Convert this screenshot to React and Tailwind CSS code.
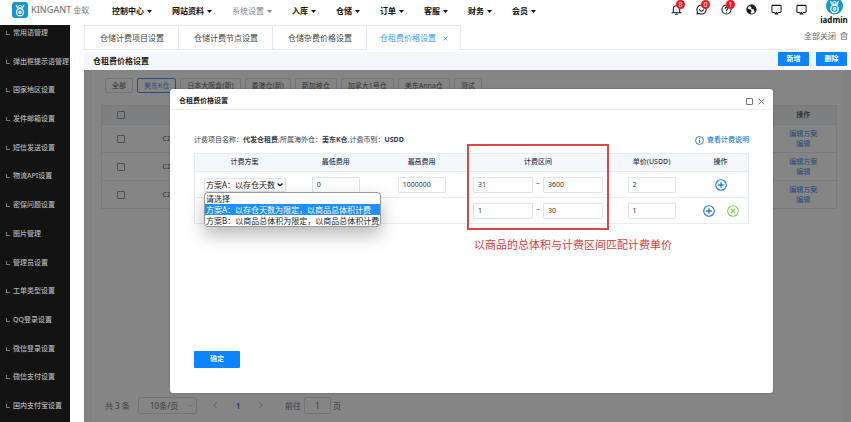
import React from "react";

const NAV = [
  { label: "控制中心" },
  { label: "网站资料" },
  { label: "系统设置", muted: true },
  { label: "入库" },
  { label: "仓储" },
  { label: "订单" },
  { label: "客服" },
  { label: "财务" },
  { label: "会员" },
];

const SIDE = [
  "常用语管理",
  "弹出框提示语管理",
  "国家地区设置",
  "发件邮箱设置",
  "短信发送设置",
  "物流API设置",
  "密保问题设置",
  "图片管理",
  "管理员设置",
  "工单类型设置",
  "QQ登录设置",
  "微信登录设置",
  "微信支付设置",
  "国内支付宝设置",
];

const TABS = ["仓储计费项目设置", "仓储计费节点设置", "仓储杂费价格设置"];

const WAREHOUSES = [
  "全部",
  "美东K仓",
  "日本大阪倉(新)",
  "香港仓(新)",
  "新加坡仓",
  "加拿大1号仓",
  "美东Anna仓",
  "测试",
];

const PLANS = [
  "请选择",
  "方案A：以存仓天数为限定，以商品总体积计费",
  "方案B：以商品总体积为限定，以商品总体积计费",
];

function AntMark() {
  return (
    <g fill="none" stroke="#fff" strokeWidth="1.3">
      <circle cx="8" cy="10.200" r="3.500" />
      <circle cx="8" cy="10.200" r="1.100" />
      <path d="M5.800 6.300 4.200 3.200M10.200 6.300l1.600-3.100" strokeWidth="1.100" strokeLinecap="round" />
      <path d="M6.300 4.600a1.800 1.800 0 0 1 3.400 0q0 1.600-1.700 1.700-1.700-.1-1.700-1.700z" strokeWidth="1" />
    </g>
  );
}

function Badge({ children }) {
  return (
    <span className="absolute -top-1 left-[5px] flex size-[9px] items-center justify-center rounded-full bg-[#f5141e] text-[7px] leading-none text-white">
      {children}
    </span>
  );
}

function HeaderIcon({ label, badge, children }) {
  return (
    <button type="button" aria-label={label} className="relative size-[11px]">
      <svg viewBox="0 0 12 12" className="size-full" fill="none" stroke="#111" strokeWidth="1.1" strokeLinecap="round" strokeLinejoin="round">
        {children}
      </svg>
      {badge && <Badge>{badge}</Badge>}
    </button>
  );
}

function Monitor() {
  return <path d="M4 9.200H1.900A.9.9 0 0 1 1 8.300V2.400a.9.9 0 0 1 .9-.9h8.200a.9.9 0 0 1 .9.9v5.900a.9.9 0 0 1-.9.9H8M4.300 11h3.400L6 9z" />;
}

function Header() {
  return (
    <header className="flex h-[25px] shrink-0 items-start bg-white">
      <a href="#home" className="flex w-[112px] shrink-0 items-center pl-3 pt-[2px]">
        <svg viewBox="0 0 16 16" className="mr-[3px] size-4 shrink-0">
          <rect width="16" height="16" rx="3" fill="#1596d8" />
          <AntMark />
        </svg>
        <span className="flex items-center gap-[2px] whitespace-nowrap text-[9px] leading-4 text-[#777b80]">
          <span className="font-medium">KINGANT</span>
          <span className="text-[8px]">金蚁</span>
        </span>
      </a>
      <nav className="flex flex-1 gap-5 pt-[5px]">
        {NAV.map((n) => (
          <button
            key={n.label}
            type="button"
            className={`flex items-center gap-[3px] whitespace-nowrap text-[8px] leading-3 ${n.muted ? "text-[#888]" : "font-bold text-[#111]"}`}
          >
            {n.label}
            <svg viewBox="0 0 10 6" className="h-[3px] w-[5px]">
              <path d="M0 0h10L5 6z" fill="currentColor" />
            </svg>
          </button>
        ))}
      </nav>
      <div className="flex gap-[14px] pr-[10px] pt-1">
        <HeaderIcon label="通知" badge="8">
          <path d="M1 9.500h10M2.500 9.300V5.500a3.500 3.500 0 0 1 7 0v3.800M5 11.300h2M6 2V1" />
        </HeaderIcon>
        <HeaderIcon label="消息" badge="0">
          <path d="M6 1a5 5 0 1 1-2.300 9.400L1.200 11l.4-2.600A5 5 0 0 1 6 1zM3.800 6.200a2.300 2.300 0 0 0 4.400 0" />
        </HeaderIcon>
        <HeaderIcon label="帮助" badge="1">
          <circle cx="6" cy="6" r="5" />
          <path d="M4.600 4.800a1.400 1.400 0 1 1 2 1.300q-.6.300-.6 1M6 8.800v.1" />
        </HeaderIcon>
        <HeaderIcon label="语言">
          <circle cx="6" cy="6" r="5" />
          <path d="M1.300 4.500 3 5.800l2 .4.800 1.300L5 9l-.3 1.800L2 9.200 1 6zM5.500 1.200 5 3l1.500 1L6 5.200l2.500.3.500 1.800 1 1.500L11 6.500 10 3.200 8 1.500z" fill="#111" strokeWidth="0.400" />
        </HeaderIcon>
        <HeaderIcon label="屏幕"><Monitor /></HeaderIcon>
        <HeaderIcon label="大屏"><Monitor /></HeaderIcon>
      </div>
      <button type="button" className="flex w-[34px] flex-col items-center overflow-hidden text-[8px] font-bold leading-[10px] text-[#111]">
        <svg viewBox="0 2 16 14" className="h-[15px] w-[17px]">
          <circle cx="8" cy="7.500" r="8" fill="#1596d8" />
          <AntMark />
        </svg>
        iadmin
      </button>
    </header>
  );
}

function Sidebar() {
  return (
    <aside className="w-[70px] shrink-0 overflow-hidden bg-[#131313]">
      <ul className="flex h-full flex-col justify-between pb-2">
        {SIDE.map((s) => (
          <li key={s}>
            <a href="#menu" className="flex h-4 items-center gap-[3px] whitespace-nowrap pl-[6px] text-[7px] font-medium leading-4 text-[#b5b5b5]">
              <span className="size-[4px] shrink-0 border-b border-l border-[#777]" />
              {s}
            </a>
          </li>
        ))}
      </ul>
    </aside>
  );
}

function TabBar() {
  return (
    <div className="flex h-[27px] shrink-0">
      <div className="flex h-[25px] flex-1 text-[8px] text-[#444]">
        <div role="tablist" className="flex border-l border-t border-[#e4e7ed]">
          {TABS.map((t) => (
            <button key={t} type="button" role="tab" className="whitespace-nowrap border-b border-r border-[#e4e7ed] pl-[15px] pr-[14px]">
              {t}
            </button>
          ))}
          <button type="button" role="tab" aria-selected="true" className="flex items-center gap-[7px] whitespace-nowrap border-r border-[#e4e7ed] pl-[13px] pr-3 text-[#409eff]">
            仓租费价格设置
            <svg viewBox="0 0 8 8" className="size-[5px]" stroke="currentColor" strokeWidth="1.2">
              <path d="m1 1 6 6M7 1 1 7" />
            </svg>
          </button>
        </div>
        <div className="flex-1 border-b border-[#e4e7ed]" />
      </div>
      <button type="button" className="flex h-[22px] w-[52px] items-center justify-end gap-1 whitespace-nowrap pr-[3px] text-[8px] text-[#666]">
        全部关闭
        <svg viewBox="0 0 10 10" className="size-2" fill="none" stroke="currentColor" strokeWidth="0.9">
          <path d="M.5 2.500h9M1.800 2.500v7h6.400v-7M3.500 2.300V.6h3v1.700M3.900 4.300v3.400M6.100 4.300v3.400" />
        </svg>
      </button>
    </div>
  );
}

function RateList() {
  return (
    <div className="flex h-full flex-col border-x-8 border-[#f6faf9] bg-white">
      <div className="flex flex-1 flex-col pb-2 pl-[9px] pr-[6px] pt-2">
        <div className="flex gap-[4px] pl-1">
          {WAREHOUSES.map((w, i) => (
            <button
              key={w}
              type="button"
              className={`h-[15px] whitespace-nowrap rounded-[2px] border px-[6px] text-[7px] leading-3 ${i === 1 ? "border-[#4a98f5] text-[#4a98f5]" : "border-[#dcdfe6] text-[#666]"}`}
            >
              {w}
            </button>
          ))}
        </div>
        <table className="mt-3 w-full table-fixed border-collapse text-[7px] leading-[10px]">
          <thead>
            <tr className="h-[19px] border border-[#e6eaf0] bg-[#f0f4f6]">
              <th className="w-[38px]">
                <input type="checkbox" aria-label="全选" className="mx-auto block size-2 appearance-none rounded-[1px] border border-[#999]" />
              </th>
              <th />
              <th className="w-[66px] font-medium text-[#555]">操作</th>
            </tr>
          </thead>
          <tbody>
            {[1, 2, 3].map((r) => (
              <tr key={r} className="h-[28px] border border-[#e6eaf0]">
                <td>
                  <input type="checkbox" aria-label={`选择第${r}行`} className="mx-auto block size-2 appearance-none rounded-[1px] border border-[#999]" />
                </td>
                <td className="pl-[23px] text-[#666]">CZ</td>
                <td className="text-center text-[#4a92ee]">
                  <a href="#plan" className="block">编辑方案</a>
                  <a href="#edit" className="block">编辑</a>
                </td>
              </tr>
            ))}
          </tbody>
        </table>
        <div className="mt-auto flex h-[17px] items-center whitespace-nowrap pl-1 text-[8px] text-[#777]">
          <span className="w-[33px]">共 3 条</span>
          <span className="relative flex h-full w-[59px] items-center">
            <select aria-label="每页条数" className="h-full w-full appearance-none rounded-[2px] border border-[#dcdfe6] pl-[11px]">
              <option>10条/页</option>
            </select>
            <svg viewBox="0 0 8 5" className="pointer-events-none absolute right-[4px] w-[5px]" fill="none" stroke="#aaa">
              <path d="m.5.500 3.500 3.500L7.500.5" />
            </svg>
          </span>
          <button type="button" aria-label="上一页" className="ml-4 w-1">
            <svg viewBox="0 0 5 8" fill="none" stroke="#999"><path d="M4.500.5 1 4l3.500 3.500" /></svg>
          </button>
          <button type="button" className="w-[42px] font-bold text-[#4a92ee]">1</button>
          <button type="button" aria-label="下一页" className="w-1">
            <svg viewBox="0 0 5 8" fill="none" stroke="#999"><path d="M.5.500 4 4 .5 7.500" /></svg>
          </button>
          <label htmlFor="goto" className="ml-[22px] mr-[3px]">前往</label>
          <input id="goto" defaultValue="1" className="mr-[2px] h-full w-[27px] rounded-[2px] border border-[#dcdfe6] text-center" />
          <span>页</span>
        </div>
      </div>
    </div>
  );
}

function Field({ label, value, className }) {
  return (
    <input
      aria-label={label}
      defaultValue={value}
      className={`h-4 rounded-[1px] border border-[#dfe4ea] bg-white pl-1 text-[7px] text-[#333] ${className}`}
    />
  );
}

function AddButton() {
  return (
    <button type="button" aria-label="添加" className="size-3">
      <svg viewBox="0 0 12 12" fill="none" stroke="#1a7be0" strokeWidth="1.1">
        <circle cx="6" cy="6" r="5.300" />
        <path d="M6 3.200v5.600M3.200 6h5.600" strokeWidth="1.3" />
      </svg>
    </button>
  );
}

function RemoveButton() {
  return (
    <button type="button" aria-label="移除" className="size-3">
      <svg viewBox="0 0 12 12" fill="none" stroke="#7ed957" strokeWidth="1.1">
        <circle cx="6" cy="6" r="5.300" />
        <path d="m4 4 4 4M8 4 4 8" strokeWidth="1.3" />
      </svg>
    </button>
  );
}

function RangeFields({ from, to }) {
  return (
    <div className="flex items-center justify-center gap-[3px]">
      <Field label="区间起" value={from} className="w-[60px]" />~
      <Field label="区间止" value={to} className="w-[60px]" />
    </div>
  );
}

function PlanSelect() {
  return (
    <div className="relative ml-[9px] w-[82px]">
      <select
        aria-label="计费方案"
        defaultValue={PLANS[1]}
        className="block h-[14px] w-full appearance-none overflow-hidden rounded-[1px] border border-[#dfe4ea] bg-white pl-px pr-[10px] text-[8px] leading-3 text-[#222]"
      >
        {PLANS.map((p) => (
          <option key={p}>{p}</option>
        ))}
      </select>
      <svg viewBox="0 0 8 5" className="pointer-events-none absolute right-[3px] top-[5px] w-[6px]" fill="none" stroke="#111" strokeWidth="1.8">
        <path d="m.8.800 3.200 3 3.200-3" />
      </svg>
      <ul
        role="listbox"
        aria-label="计费方案选项"
        className="absolute left-0 top-full z-10 overflow-hidden whitespace-nowrap rounded-[4px] border border-[#999] bg-white text-left text-[8px] leading-[11px] text-[#222] shadow-[0_8px_18px_rgba(0,0,0,0.28)]"
      >
        {PLANS.map((p, i) => (
          <li key={p} role="option" aria-selected={i === 1} className={`px-px ${i === 1 ? "bg-[#1e90ff] text-white" : ""}`}>
            {p}
          </li>
        ))}
      </ul>
    </div>
  );
}

function Dialog() {
  return (
    <section role="dialog" aria-label="仓租费价格设置" className="flex flex-1 flex-col rounded-[3px] bg-white shadow-[0_0_2px_rgba(0,0,0,0.3)]">
      <div className="flex h-[21px] shrink-0 items-center border-b border-[#eee] pl-[9px] pr-2 pt-[5px]">
        <h2 className="flex-1 text-[7px] font-bold text-[#222]">仓租费价格设置</h2>
        <button type="button" aria-label="最大化" className="mr-[5px] size-[7px] rounded-[1px] border border-[#777]" />
        <button type="button" aria-label="关闭" className="size-[7px]">
          <svg viewBox="0 0 8 8" stroke="#666" strokeWidth="1"><path d="m.8.800 6.400 6.400M7.200.8.800 7.200" /></svg>
        </button>
      </div>
      <div className="flex flex-1 flex-col items-start px-6 pb-[25px] pt-6">
        <div className="flex h-3 w-full items-center justify-between whitespace-nowrap text-[7px] text-[#333a50]">
          <p>
            计费项目名称：<b>代发仓租费</b>,所属海外仓：<b>美东K仓</b>,计费币别：<b>USDD</b>
          </p>
          <a href="#help" className="flex items-center gap-[3px] font-medium text-[#1a7be0]">
            <svg viewBox="0 0 10 10" className="size-[9px]" fill="none" stroke="currentColor">
              <circle cx="5" cy="5" r="4.400" />
              <path d="M5 4.300v3.200M5 2.400v1" />
            </svg>
            查看计费说明
          </a>
        </div>
        <table className="mt-[7px] w-full table-fixed border-collapse border border-[#e8edf2] text-[7px] text-[#333a50]">
          <colgroup>
            <col className="w-[18%]" />
            <col className="w-[15%]" />
            <col className="w-[16%]" />
            <col className="w-[26%]" />
            <col className="w-[15%]" />
            <col className="w-[10%]" />
          </colgroup>
          <thead>
            <tr className="h-[18px] bg-[#f4f8fc]">
              <th className="font-medium">计费方案</th>
              <th className="font-medium">最低费用</th>
              <th className="font-medium">最高费用</th>
              <th className="relative font-medium">
                计费区间
                <span className="pointer-events-none absolute inset-x-px -top-[10px] h-[86px] border-2 border-[#e04545]">
                  <span className="absolute left-[5px] top-full mt-[9px] whitespace-nowrap text-[11px] font-normal leading-4 text-[#e03a3a]">
                    以商品的总体积与计费区间匹配计费单价
                  </span>
                </span>
              </th>
              <th className="font-medium">单价(USDD)</th>
              <th className="font-medium">操作</th>
            </tr>
          </thead>
          <tbody>
            <tr className="h-[26px] border-t border-[#e8edf2]">
              <td><PlanSelect /></td>
              <td className="text-center"><Field label="最低费用" value="0" className="w-12" /></td>
              <td className="text-center"><Field label="最高费用" value="1000000" className="w-12" /></td>
              <td><RangeFields from="31" to="3600" /></td>
              <td className="text-center"><Field label="单价" value="2" className="w-12" /></td>
              <td><div className="flex justify-center"><AddButton /></div></td>
            </tr>
            <tr className="h-[26px] border-t border-[#e8edf2]">
              <td colSpan={3} />
              <td><RangeFields from="1" to="30" /></td>
              <td className="text-center"><Field label="单价" value="1" className="w-12" /></td>
              <td><div className="flex justify-center gap-3"><AddButton /><RemoveButton /></div></td>
            </tr>
          </tbody>
        </table>
        <button type="button" className="mt-auto h-[17px] w-[46px] rounded-[1px] bg-[#0a84ff] text-[7px] font-medium text-white">确定</button>
      </div>
    </section>
  );
}

export default function App() {
  return (
    <div className="flex h-screen flex-col overflow-hidden bg-white font-['Noto_Sans','Noto_Sans_CJK_SC',sans-serif]">
      <Header />
      <div className="flex min-h-0 flex-1">
        <Sidebar />
        <main className="ml-[14px] flex min-w-0 flex-1 flex-col">
          <TabBar />
          <div className="flex h-[18px] shrink-0 items-center gap-[7px] bg-[#f4f8fd] pl-[9px] pr-1">
            <h1 className="flex-1 text-[8px] font-bold text-[#222]">仓租费价格设置</h1>
            <button type="button" className="mb-[4px] h-[14px] w-[31px] rounded-[1px] bg-[#0a84ff] text-[7px] font-bold text-white">新增</button>
            <button type="button" className="mb-[4px] h-[14px] w-[31px] rounded-[1px] bg-[#0a84ff] text-[7px] font-bold text-white">删除</button>
          </div>
          <div className="relative min-h-0 flex-1">
            <RateList />
            <div className="absolute inset-0 flex bg-black/48 pb-[29px] pl-[86px] pr-[78px] pt-[19px]">
              <Dialog />
            </div>
          </div>
        </main>
      </div>
    </div>
  );
}
